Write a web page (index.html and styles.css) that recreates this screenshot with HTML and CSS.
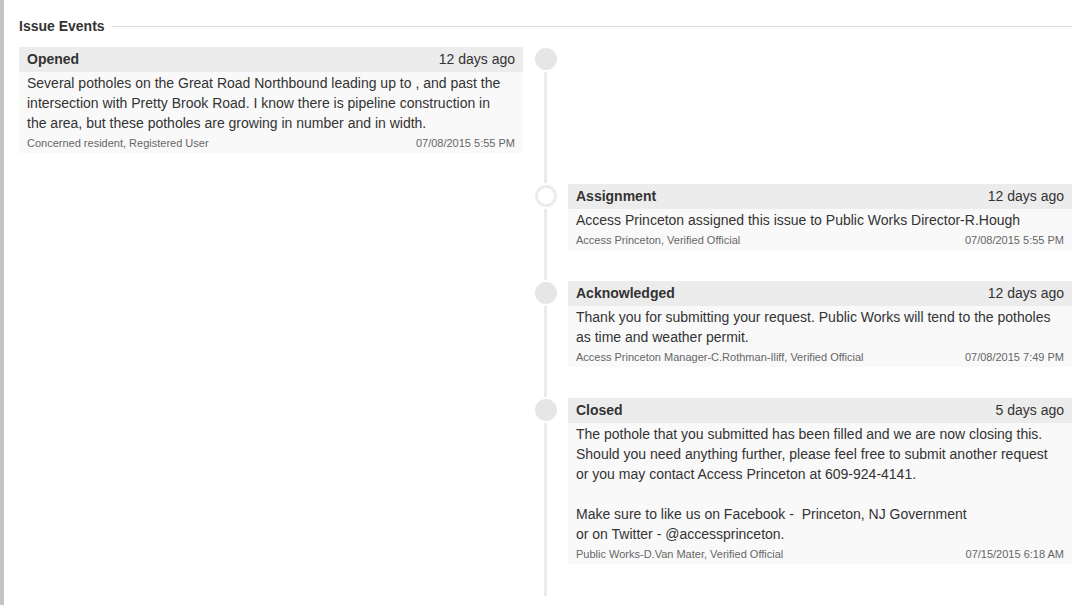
FILE: index.html
```html
<!DOCTYPE html>
<html>
<head>
<meta charset="utf-8">
<link rel="stylesheet" href="styles.css">
</head>
<body>
<div class="page">
  <div class="section-title">
    <h2>Issue Events</h2>
    <div class="rule"></div>
  </div>
  <div class="timeline">
    <div class="card left">
      <div class="card-head"><span class="kind">Opened</span><span class="ago">12 days ago</span></div>
      <div class="card-body">
        <p>Several potholes on the Great Road Northbound leading up to , and past the<br>intersection with Pretty Brook Road. I know there is pipeline construction in<br>the area, but these potholes are growing in number and in width.</p>
        <div class="meta"><span>Concerned resident, Registered User</span><span>07/08/2015 5:55 PM</span></div>
      </div>
    </div>
    <div class="dot"></div>

    <div class="dot ring"></div>
    <div class="card right">
      <div class="card-head"><span class="kind">Assignment</span><span class="ago">12 days ago</span></div>
      <div class="card-body">
        <p>Access Princeton assigned this issue to Public Works Director-R.Hough</p>
        <div class="meta"><span>Access Princeton, Verified Official</span><span>07/08/2015 5:55 PM</span></div>
      </div>
    </div>

    <div class="dot"></div>
    <div class="card right">
      <div class="card-head"><span class="kind">Acknowledged</span><span class="ago">12 days ago</span></div>
      <div class="card-body">
        <p>Thank you for submitting your request. Public Works will tend to the potholes<br>as time and weather permit.</p>
        <div class="meta"><span>Access Princeton Manager-C.Rothman-Iliff, Verified Official</span><span>07/08/2015 7:49 PM</span></div>
      </div>
    </div>

    <div class="dot"></div>
    <div class="card right">
      <div class="card-head"><span class="kind">Closed</span><span class="ago">5 days ago</span></div>
      <div class="card-body">
        <p>The pothole that you submitted has been filled and we are now closing this.<br>Should you need anything further, please feel free to submit another request<br>or you may contact Access Princeton at 609-924-4141.<br><br>Make sure to like us on Facebook -&nbsp; Princeton, NJ Government<br>or on Twitter - @accessprinceton.</p>
        <div class="meta"><span>Public Works-D.Van Mater, Verified Official</span><span>07/15/2015 6:18 AM</span></div>
      </div>
    </div>
  </div>
</div>
</body>
</html>
```
FILE: styles.css
```css
html, body {
  margin: 0;
  padding: 0;
  background: #fff;
}
body {
  font-family: "Liberation Sans", Arial, sans-serif;
  color: #333;
  font-size: 14px;
}
.page {
  border-left: 4px solid #c4c4c4;
  min-height: 605px;
  box-sizing: border-box;
  padding: 16px 13px 0 15px;
}
.section-title {
  display: flex;
  align-items: center;
  gap: 7px;
  height: 20px;
  margin-bottom: 11px;
}
.section-title h2 {
  margin: 0;
  font-size: 14px;
  font-weight: bold;
  line-height: 20px;
  color: #333;
}
.rule {
  flex: 1;
  height: 1px;
  background: #dcdcdc;
  margin-top: 1px;
}
.timeline {
  position: relative;
  display: grid;
  grid-template-columns: 504px 45px 504px;
  row-gap: 31px;
  padding-bottom: 32px;
  align-items: start;
}
.timeline::before {
  content: "";
  position: absolute;
  left: 525px;
  top: 25px;
  bottom: 0;
  width: 3px;
  background: #ebebeb;
}
.card.left { grid-column: 1; }
.card.right { grid-column: 3; }
.dot {
  grid-column: 2;
  position: relative;
  z-index: 1;
  justify-self: center;
  width: 22px;
  height: 22px;
  margin-top: 1px;
  border-radius: 50%;
  background: #e6e6e6;
  box-shadow: 0 0 0 2px #fff;
  box-sizing: border-box;
}
.dot.ring {
  background: #fff;
  border: 3px solid #ececec;
}
.card-head {
  display: flex;
  justify-content: space-between;
  background: #ececec;
  height: 25px;
  line-height: 25px;
  padding: 0 8px;
}
.kind { font-weight: bold; }
.card-body {
  background: #f9f9f9;
  padding: 1px 8px 0;
}
.card-body p {
  margin: 0;
  line-height: 20px;
}
.meta {
  display: flex;
  justify-content: space-between;
  font-size: 11px;
  color: #666;
  line-height: 16px;
  padding: 2px 0 2px;
}
```
